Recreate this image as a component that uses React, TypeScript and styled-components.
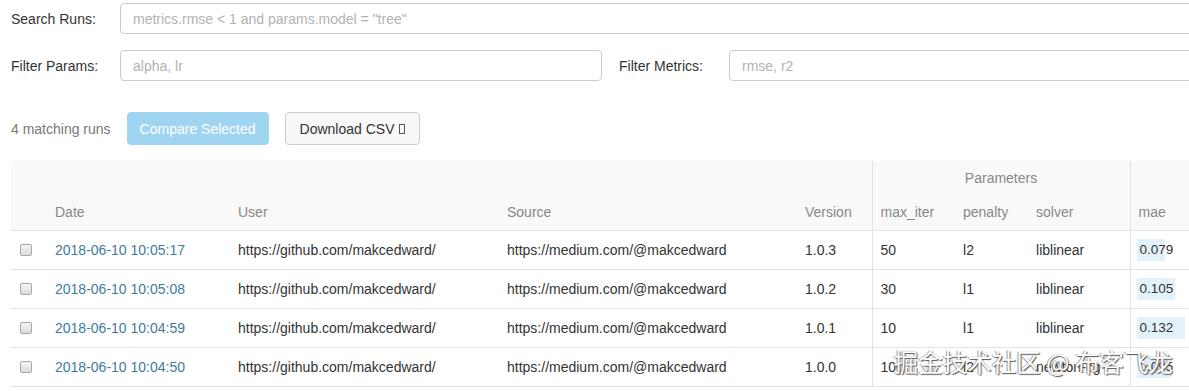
import React from "react";
import styled, { createGlobalStyle } from "styled-components";

const GlobalStyle = createGlobalStyle`
  body {
    margin: 0;
    background: #fff;
    color: #333;
    font-family: "Liberation Sans", Arial, sans-serif;
    font-size: 14px;
    overflow: hidden;
  }
  * {
    box-sizing: border-box;
  }
`;

type Run = {
  date: string;
  user: string;
  source: string;
  version: string;
  maxIter: string;
  penalty: string;
  solver: string;
  mae: number;
};

const runs: Run[] = [
  { date: "2018-06-10 10:05:17", user: "https://github.com/makcedward/", source: "https://medium.com/@makcedward", version: "1.0.3", maxIter: "50", penalty: "l2", solver: "liblinear", mae: 0.079 },
  { date: "2018-06-10 10:05:08", user: "https://github.com/makcedward/", source: "https://medium.com/@makcedward", version: "1.0.2", maxIter: "30", penalty: "l1", solver: "liblinear", mae: 0.105 },
  { date: "2018-06-10 10:04:59", user: "https://github.com/makcedward/", source: "https://medium.com/@makcedward", version: "1.0.1", maxIter: "10", penalty: "l1", solver: "liblinear", mae: 0.132 },
  { date: "2018-06-10 10:04:50", user: "https://github.com/makcedward/", source: "https://medium.com/@makcedward", version: "1.0.0", maxIter: "100", penalty: "l2", solver: "newton-cg", mae: 0.095 },
];

const BAR_MAX = 48;

const Page = styled.div`
  position: relative;
  width: 1211px;
  padding: 3px 0 0 11px;
`;

const FilterGrid = styled.div`
  display: grid;
  grid-template-columns: 109px 482px 127px 482px;
  row-gap: 16px;
  align-items: center;
`;

const Label = styled.label<{ $indent?: boolean }>`
  color: #333;
  padding-left: ${(p) => (p.$indent ? "17px" : "0")};
`;

const TextInput = styled.input<{ $wide?: boolean }>`
  grid-column: ${(p) => (p.$wide ? "2 / 5" : "auto")};
  height: 31px;
  border: 1px solid #ccc;
  border-radius: 4px;
  padding: 0 12px;
  font-family: inherit;
  font-size: 14px;
  color: #333;

  &::placeholder {
    color: #b3b3b3;
  }
`;

const ActionBar = styled.div`
  display: flex;
  align-items: center;
  gap: 16px;
  margin-top: 31px;
`;

const RunCount = styled.span`
  color: #777;
`;

const Button = styled.button<{ $primary?: boolean }>`
  height: 33px;
  padding: 0 ${(p) => (p.$primary ? "12px" : "14px")};
  border-radius: 4px;
  font-family: inherit;
  font-size: 14px;
  border: 1px solid ${(p) => (p.$primary ? "#9fd5f0" : "#ccc")};
  background: ${(p) => (p.$primary ? "#9fd5f0" : "#f8f8f8")};
  color: ${(p) => (p.$primary ? "#fff" : "#333")};
  display: flex;
  align-items: center;
  gap: 4px;
`;

const MissingGlyph = styled.span`
  display: inline-block;
  width: 6px;
  height: 10px;
  border: 1px solid #555;
  margin-top: 1px;
`;

const Table = styled.table`
  margin-top: 16px;
  width: 1200px;
  border-collapse: collapse;
  table-layout: fixed;
`;

const Head = styled.thead`
  background: #f9f9f9;
`;

const GroupRow = styled.tr`
  height: 34px;
`;

const HeaderRow = styled.tr`
  height: 35px;
  border-bottom: 1px solid #e2e2e2;
`;

const Th = styled.th<{ $divider?: boolean; $center?: boolean; $closing?: boolean }>`
  font-weight: normal;
  color: #888;
  text-align: ${(p) => (p.$center ? "center" : "left")};
  padding: 0 8px;
  vertical-align: middle;
  border-left: ${(p) => (p.$divider ? "1px solid #e2e2e2" : "none")};
  border-right: ${(p) => (p.$closing ? "1px solid #e2e2e2" : "none")};
`;

const BodyRow = styled.tr`
  height: 39px;
  border-bottom: 1px solid #e2e2e2;
`;

const Td = styled.td<{ $divider?: boolean }>`
  padding: 0 8px;
  white-space: nowrap;
  overflow: hidden;
  border-left: ${(p) => (p.$divider ? "1px solid #e2e2e2" : "none")};
`;

const Check = styled.input.attrs({ type: "checkbox" })`
  appearance: none;
  display: block;
  width: 12px;
  height: 12px;
  margin: 0 0 0 1px;
  border: 1px solid #a8a8a8;
  border-radius: 2px;
  background: linear-gradient(#f4f4f4, #dcdcdc);
`;

const DateLink = styled.a`
  color: #3f7c9a;
  text-decoration: none;
`;

const MaeTd = styled.td`
  padding: 0 0 0 6px;
  border-left: 1px solid #e2e2e2;
  white-space: nowrap;
`;

const MaeBar = styled.span`
  display: inline-block;
  height: 22px;
  line-height: 22px;
  padding-left: 3px;
  background: #e3f2f8;
  overflow: visible;
  font-size: 13.5px;
`;

const Watermark = styled.div`
  position: absolute;
  right: 38px;
  bottom: 8px;
  font-family: "Noto Sans CJK SC", sans-serif;
  font-size: 24.5px;
  color: #fff;
  text-shadow: 1px 1px 1px #555, -1px 0 1px #999;
  white-space: pre;
  pointer-events: none;
`;

export default function App() {
  const maxMae = Math.max(...runs.map((r) => r.mae));
  return (
    <>
      <GlobalStyle />
      <Page>
        <FilterGrid>
          <Label>Search Runs:</Label>
          <TextInput $wide placeholder={'metrics.rmse < 1 and params.model = "tree"'} />
          <Label>Filter Params:</Label>
          <TextInput placeholder="alpha, lr" />
          <Label $indent>Filter Metrics:</Label>
          <TextInput placeholder="rmse, r2" />
        </FilterGrid>

        <ActionBar>
          <RunCount>4 matching runs</RunCount>
          <Button $primary>Compare Selected</Button>
          <Button>
            Download CSV <MissingGlyph />
          </Button>
        </ActionBar>

        <Table>
          <colgroup>
            <col style={{ width: 36 }} />
            <col style={{ width: 183 }} />
            <col style={{ width: 269 }} />
            <col style={{ width: 298 }} />
            <col style={{ width: 75 }} />
            <col style={{ width: 83 }} />
            <col style={{ width: 73 }} />
            <col style={{ width: 102 }} />
            <col style={{ width: 81 }} />
          </colgroup>
          <Head>
            <GroupRow>
              <Th colSpan={5} />
              <Th colSpan={3} $divider $closing $center>
                Parameters
              </Th>
              <Th $divider />
            </GroupRow>
            <HeaderRow>
              <Th />
              <Th>Date</Th>
              <Th>User</Th>
              <Th>Source</Th>
              <Th>Version</Th>
              <Th $divider>max_iter</Th>
              <Th>penalty</Th>
              <Th>solver</Th>
              <Th $divider>mae</Th>
            </HeaderRow>
          </Head>
          <tbody>
            {runs.map((run) => (
              <BodyRow key={run.date}>
                <Td>
                  <Check />
                </Td>
                <Td>
                  <DateLink href="#">{run.date}</DateLink>
                </Td>
                <Td>{run.user}</Td>
                <Td>{run.source}</Td>
                <Td>{run.version}</Td>
                <Td $divider>{run.maxIter}</Td>
                <Td>{run.penalty}</Td>
                <Td>{run.solver}</Td>
                <MaeTd>
                  <MaeBar style={{ width: (run.mae / maxMae) * BAR_MAX }}>{run.mae.toFixed(3)}</MaeBar>
                </MaeTd>
              </BodyRow>
            ))}
          </tbody>
        </Table>

        <Watermark>掘金技术社区 @ 布客飞龙</Watermark>
      </Page>
    </>
  );
}
